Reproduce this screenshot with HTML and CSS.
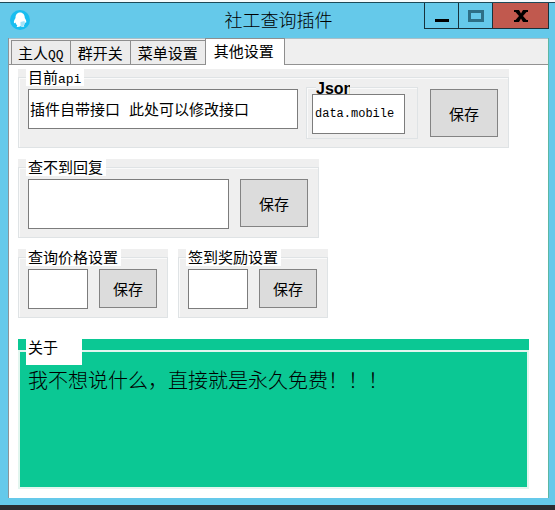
FILE: index.html
```html
<!DOCTYPE html>
<html lang="zh-CN">
<head>
<meta charset="utf-8">
<title>社工查询插件</title>
<link rel="stylesheet" href="styles.css">
</head>
<body>
<div class="window">
  <header class="titlebar">
    <svg class="app-icon" viewBox="0 0 20 20" aria-hidden="true">
      <circle cx="10" cy="10" r="10" fill="#18bdf0"/>
      <path d="M10 2.500c-3 0-4.500 2.400-4.500 5.500-1 1.800-2 3.500-1.500 5 .4.600 1-.1 1.400-.6.300 1.300 1 2.300 2 3-1 .5-1 1.600.600 1.600 1.200 0 2-.4 2.500-.9.700.6 1.500.9 2.700.7 1.500-.2 1.300-1.100.4-1.600.7-.7 1.200-1.500 1.400-2.600.8.400 1.200.3 1.300-.5.100-1.400-.6-2.800-1.500-4.100 0-3.100-1.700-5.500-4.800-5.500z" fill="#fff"/>
      <path d="M10.500 12l4-1 .5 3-2.500 2.500h-2z" fill="#a5e3f8"/>
    </svg>
    <h1 class="title">社工查询插件</h1>
    <div class="controls">
      <button class="control" aria-label="最小化"><svg width="16" height="14"><path d="M1 10h14v3H1z" fill="#000"/></svg></button>
      <button class="control" aria-label="最大化"><svg width="16" height="14"><path d="M1.500 2.500h13v9h-13z" fill="none" stroke="#2d6f86" stroke-width="3"/></svg></button>
      <button class="control close" aria-label="关闭"><svg width="14" height="12"><path d="M0 0h5l2 3.500L9 0h5v2h-1.500L9 6l3.500 4H14v2H9L7 8.500 5 12H0v-2h1.500L5 6 1.500 2H0z" fill="#000"/></svg></button>
    </div>
  </header>

  <main class="client">
    <nav class="tabs" role="tablist">
      <button class="tab" role="tab">主人<span class="latin">QQ</span></button>
      <button class="tab" role="tab">群开关</button>
      <button class="tab" role="tab">菜单设置</button>
      <button class="tab active" role="tab" aria-selected="true">其他设置</button>
    </nav>

    <div class="panel">
      <section class="group group-api">
        <label class="legend" for="api">目前<span class="latin">api</span></label>
        <div class="fields">
          <input class="box grow" id="api" type="text" value="插件自带接口 此处可以修改接口">
          <div class="group group-json">
            <label class="json-label" for="json">Json</label>
            <input class="box json-box" id="json" type="text" value="data.mobile">
          </div>
          <button class="save large">保存</button>
        </div>
      </section>

      <section class="group group-reply">
        <label class="legend" for="reply">查不到回复</label>
        <div class="fields">
          <input class="box tall grow" id="reply" type="text">
          <button class="save large">保存</button>
        </div>
      </section>

      <div class="pair">
        <section class="group group-small">
          <label class="legend" for="price">查询价格设置</label>
          <div class="fields">
            <input class="box grow" id="price" type="text">
            <button class="save">保存</button>
          </div>
        </section>
        <section class="group group-small">
          <label class="legend" for="reward">签到奖励设置</label>
          <div class="fields">
            <input class="box grow" id="reward" type="text">
            <button class="save">保存</button>
          </div>
        </section>
      </div>

      <section class="group about">
        <h2 class="legend about-legend">关于</h2>
        <p class="about-text">我不想说什么，直接就是永久免费！！！</p>
      </section>
    </div>
  </main>
</div>
</body>
</html>
```
FILE: styles.css
```css
* {
  box-sizing: border-box;
}

body {
  margin: 0;
  min-height: 100vh;
  display: flex;
  flex-direction: column;
  padding: 2px 0 5px;
  background: linear-gradient(#f4fafc 2px, #2b2d31 2px);
  color: #000;
  font: 15px/15px "Noto Sans CJK SC", sans-serif;
}

button,
input {
  margin: 0;
  color: inherit;
  font: inherit;
  border-radius: 0;
}

.window {
  flex: 1;
  display: flex;
  flex-direction: column;
  padding: 0 6px 7px 8px;
  border-top: 1px solid #1c4a59;
  background: #65c9ea;
}

/* Title bar */
.titlebar {
  display: grid;
  grid-template-columns: 1fr auto 1fr;
  height: 35px;
}

.app-icon {
  width: 20px;
  height: 20px;
  margin: 7px 0 0 2px;
}

.title {
  margin: 0;
  font-size: 18px;
  font-weight: 300;
  line-height: 33px;
}

.controls {
  display: flex;
  justify-self: end;
  height: 26px;
}

.control {
  display: flex;
  align-items: center;
  justify-content: center;
  width: 34px;
  padding: 0;
  border: 1px solid #17323c;
  border-top: 0;
  border-right: 0;
  background: transparent;
}

.close {
  width: 57px;
  border-right: 1px solid #17323c;
  background: #c1594e;
}

/* Tabs */
.client {
  flex: 1;
  display: flex;
  flex-direction: column;
  border-left: 1px solid #8b9499;
  border-right: 1px solid #5cb7a4;
  background: #fff;
}

.tabs {
  display: flex;
  align-items: flex-end;
  height: 27px;
  padding-left: 2px;
  border-top: 1px solid #a9bfc8;
  border-bottom: 1px solid #929292;
  background: #efefef;
}

.tab {
  height: 24px;
  padding: 0 6px;
  border: 1px solid #8e8e8e;
  border-right-width: 0;
  border-bottom: 0;
  background: #ececec;
  line-height: 23px;
}

.tab + .tab:not(.active) {
  padding: 0 7px;
}

.active {
  height: 27px;
  margin-bottom: -1px;
  padding: 0 10px 3px 8px;
  border-right-width: 1px;
  background: #fff;
}

.latin {
  font-family: "Liberation Mono", monospace;
  font-size: 13px;
}

/* Group boxes */
.panel {
  flex: 1;
  display: flex;
  flex-direction: column;
  gap: 11px;
  padding: 4px 19px 9px 9px;
}

.group {
  position: relative;
  padding: 0 11px 9px 10px;
  background: #efefef;
}

.group::before {
  content: "";
  position: absolute;
  inset: 8px 0 0;
  border: 1px solid #dfe3e5;
  box-shadow: inset 1px 1px #fafafa;
  pointer-events: none;
}

.legend {
  position: relative;
  display: block;
  width: fit-content;
  height: 17px;
  margin-left: -2px;
  padding: 0 3px 0 2px;
  background: #fff;
}

.fields {
  position: relative;
  display: flex;
  align-items: flex-start;
  gap: 11px;
  margin-top: 3px;
}

.grow {
  flex: 1;
  min-width: 0;
}

.box {
  height: 40px;
  padding: 0 1px;
  border: 1px solid #7c7c7c;
  background: #fff;
  font-family: "Liberation Mono", "Noto Sans CJK SC", monospace;
}

.tall {
  height: 50px;
}

.save {
  width: 58px;
  height: 39px;
  padding: 0;
  border: 1px solid #838383;
  background: #dcdcdc;
}

.large {
  width: 68px;
  height: 48px;
}

.group-api {
  margin-right: 20px;
}

.group-api > .fields {
  gap: 8px;
  margin-bottom: 2px;
}

.group-api > .fields > .save {
  margin-left: 4px;
}

.group-json {
  width: 112px;
  height: 60px;
  margin: -10px 0 -9px;
  padding: 2px 13px 0 6px;
}

.json-label {
  position: relative;
  display: block;
  width: 34px;
  height: 13px;
  margin-left: 4px;
  overflow: hidden;
  background: #efefef;
  font: bold 16px/15px "Liberation Sans", sans-serif;
  white-space: nowrap;
}

.json-box {
  position: relative;
  display: block;
  width: 100%;
  padding: 0 2px;
  font-size: 12px;
}

.group-reply {
  width: 301px;
}

.pair {
  display: flex;
  gap: 10px;
}

.group-small {
  width: 150px;
}

/* About box */
.about {
  flex: 1;
  margin-top: 10px;
  background: #0bc894;
}

.about::before {
  inset: 11px 0 0;
  border: 2px solid #e2f6ef;
  box-shadow: none;
}

.about-legend {
  width: 56px;
  height: 26px;
  margin-top: 0;
  margin-bottom: 0;
  font-size: 15px;
  font-weight: 400;
}

.about-text {
  position: relative;
  margin: 3px 0 0;
  font-family: KaiTi, "AR PL UKai CN", "Noto Sans CJK SC", sans-serif;
  font-size: 20px;
  font-weight: 300;
  line-height: 23px;
}
```
